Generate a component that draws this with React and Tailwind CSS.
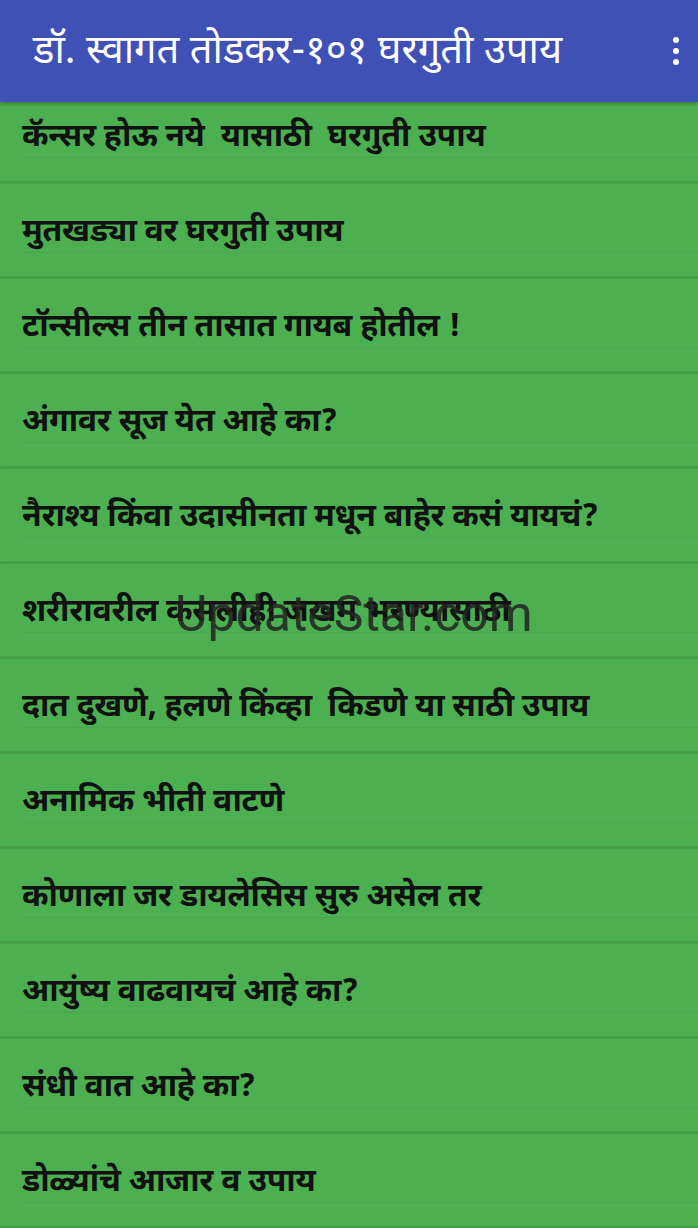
const items = [
  "कॅन्सर होऊ नये  यासाठी  घरगुती उपाय",
  "मुतखड्या वर घरगुती उपाय",
  "टॉन्सील्स तीन तासात गायब होतील !",
  "अंगावर सूज येत आहे का?",
  "नैराश्य किंवा उदासीनता मधून बाहेर कसं यायचं?",
  "शरीरावरील कसलीही जखम भरण्यासाठी",
  "दात दुखणे, हलणे किंव्हा  किडणे या साठी उपाय",
  "अनामिक भीती वाटणे",
  "कोणाला जर डायलेसिस सुरु असेल तर",
  "आयुंष्य वाढवायचं आहे का?",
  "संधी वात आहे का?",
  "डोळ्यांचे आजार व उपाय",
];

const deva = { fontFamily: '"Noto Sans Devanagari", "Noto Sans", "Lohit Devanagari", sans-serif' };

export default function App() {
  return (
    <div className="relative h-[1228px] w-[698px] overflow-hidden bg-[#4caf50]" style={deva}>
      <header className="relative z-10 flex h-[102px] items-center justify-between bg-[#3f51b5] pl-[33px] pr-[16px] shadow-[0_2px_3px_rgba(0,0,0,0.25)]">
        <h1 className="whitespace-pre pt-[4px] text-[40px] font-normal leading-none text-white">डॉ. स्वागत तोडकर-१०१ घरगुती उपाय</h1>
        <div className="flex flex-col items-center gap-[5px] pr-[3px]">
          <span className="h-[6px] w-[6px] rounded-full bg-white" />
          <span className="h-[6px] w-[6px] rounded-full bg-white" />
          <span className="h-[6px] w-[6px] rounded-full bg-white" />
        </div>
      </header>

      <ul className="-mt-[13px] flex flex-col">
        {items.map((t) => (
          <li
            key={t}
            className="flex h-[95px] items-center rounded-l-[3px] border-b-[3px] border-[#43a047] bg-[#4caf50] pl-[22px] shadow-[0_1px_1px_rgba(0,0,0,0.12)]"
          >
            <div className="flex h-[46px] w-full items-center whitespace-pre border-b border-[#46a84a] pt-[6px] text-[32px] font-bold leading-none tracking-[-0.3px] text-[#111]">
              {t}
            </div>
          </li>
        ))}
      </ul>

      <div
        className="pointer-events-none absolute left-[175px] top-[589px] text-[50px] leading-none text-[#222]/85"
        style={{ fontFamily: 'Roboto, "Noto Sans", sans-serif' }}
      >
        UpdateStar.com
      </div>
    </div>
  );
}
